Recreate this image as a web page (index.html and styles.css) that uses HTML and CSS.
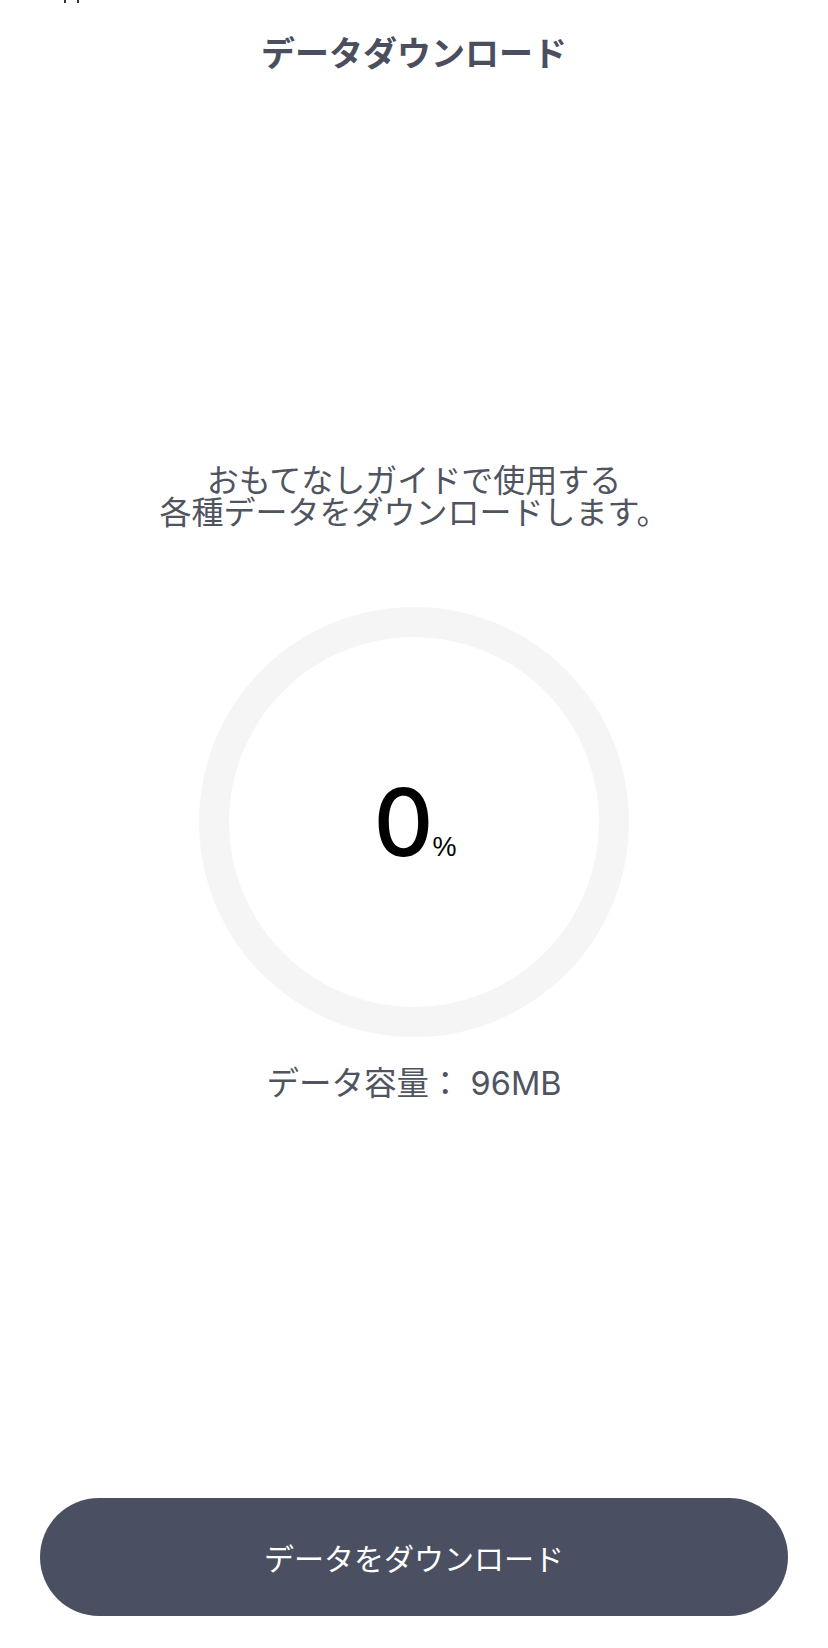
FILE: index.html
```html
<!DOCTYPE html>
<html lang="ja">
<head>
<meta charset="utf-8">
<title>データダウンロード</title>
<link rel="stylesheet" href="styles.css">
</head>
<body>
<div class="screen">
  <div class="status"><i></i><i></i></div>
  <h1 class="title">データダウンロード</h1>
  <p class="lead">おもてなしガイドで使用する<br>各種データをダウンロードします。</p>
  <div class="ring">
    <div class="pct"><span class="num">0</span><span class="unit">%</span></div>
  </div>
  <p class="size">データ容量： 96MB</p>
  <button class="cta" type="button">データをダウンロード</button>
</div>
</body>
</html>
```

FILE: styles.css
```css
html, body {
  margin: 0;
  padding: 0;
  background: #ffffff;
}
body {
  width: 828px;
  height: 1648px;
  font-family: "Inter", "Noto Sans CJK JP", sans-serif;
  color: #4f5362;
}
.screen {
  display: flex;
  flex-direction: column;
  align-items: center;
  height: 1648px;
}
.status {
  align-self: stretch;
  height: 4px;
  display: flex;
  gap: 11px;
  padding-left: 64px;
}
.status i {
  width: 2px;
  height: 3px;
  background: #333333;
}
.title {
  margin: 28px 0 0;
  font-family: "Noto Sans CJK JP", sans-serif;
  font-size: 34px;
  font-weight: 700;
  line-height: 40px;
  color: #4a4e5e;
}
.lead {
  margin: 390px 0 0;
  font-family: "Noto Sans CJK JP", sans-serif;
  font-size: 32px;
  line-height: 32px;
  text-align: center;
  color: #50545f;
}
.ring {
  margin-top: 81px;
  width: 430px;
  height: 430px;
  box-sizing: border-box;
  border: 30px solid #f5f5f5;
  border-radius: 50%;
  display: flex;
  align-items: center;
  justify-content: center;
}
.pct {
  display: flex;
  align-items: baseline;
  color: #000000;
  margin-left: 2px;
}
.num {
  font-family: "Inter", sans-serif;
  font-size: 93px;
  font-weight: 500;
  line-height: 1;
}
.unit {
  font-family: "Liberation Sans", sans-serif;
  font-size: 27px;
  line-height: 1;
  margin-left: -1px;
}
.size {
  margin: 29px 0 0;
  font-size: 32.5px;
  line-height: 36px;
  color: #50545f;
}
.cta {
  margin: auto 0 32px;
  width: 748px;
  height: 118px;
  border: 0;
  border-radius: 59px;
  background: #4a5061;
  color: #ffffff;
  font-family: "Noto Sans CJK JP", sans-serif;
  font-size: 30px;
  display: flex;
  align-items: center;
  justify-content: center;
  padding: 0;
}
```
